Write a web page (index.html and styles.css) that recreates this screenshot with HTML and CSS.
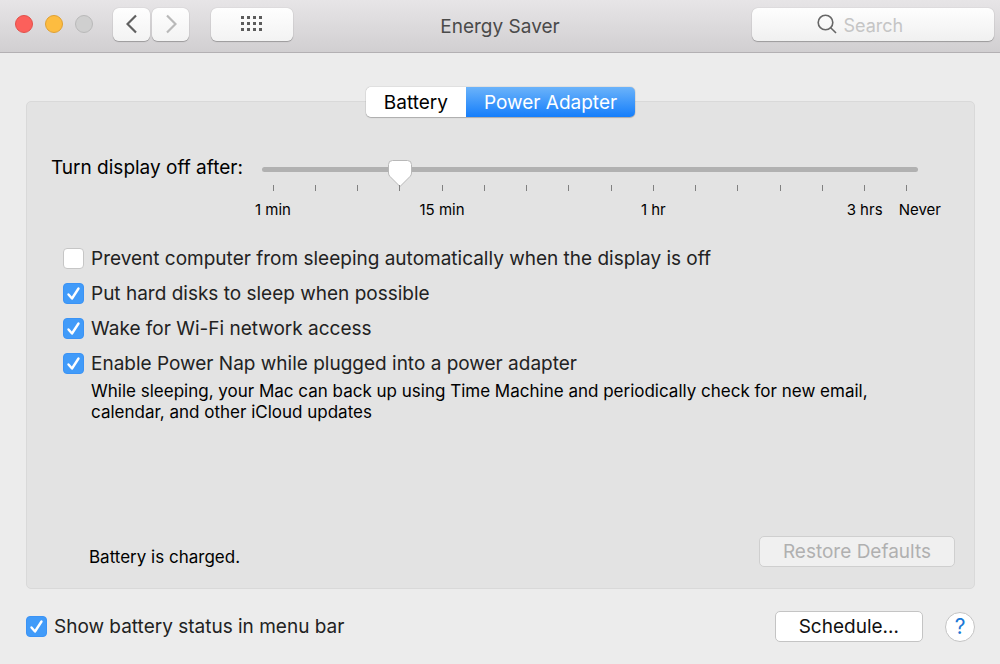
FILE: index.html
```
<!DOCTYPE html>
<html lang="en">
<head>
    <meta charset="UTF-8">
    <meta name="viewport" content="width=device-width, initial-scale=1.0">
    <title>Energy Saver</title>
    <link rel="stylesheet" href="styles.css">
</head>
<body>
    <header class="toolbar">
        <div class="toolbar-left">
            <div class="lights">
                <button type="button" class="light light-close" aria-label="Close"></button>
                <button type="button" class="light light-minimize" aria-label="Minimize"></button>
                <button type="button" class="light light-zoom" aria-label="Zoom" disabled></button>
            </div>
            <div class="nav">
                <button type="button" class="tool" aria-label="Back">
                    <svg width="12" height="20" viewBox="0 0 12 20"><path d="M10 1.500 1.500 10l8.500 8.500" fill="none" stroke="#606060" stroke-width="2.200"/></svg>
                </button>
                <button type="button" class="tool" aria-label="Forward" disabled>
                    <svg width="12" height="20" viewBox="0 0 12 20"><path d="M2 1.500 10.500 10 2 18.500" fill="none" stroke="#b9b9b9" stroke-width="2.200"/></svg>
                </button>
            </div>
            <button type="button" class="tool tool-grid" aria-label="Show All">
                <svg width="22" height="16" viewBox="0 0 22 16" fill="none" stroke="#5c5c5c" stroke-width="3">
                    <path d="M0 1.500h22M0 7.500h22M0 13.500h22" stroke-dasharray="3 3"/>
                </svg>
            </button>
        </div>
        <h1>Energy Saver</h1>
        <label class="search">
            <svg width="20" height="20" viewBox="0 0 20 20" fill="none" stroke="#666" stroke-width="1.600">
                <circle cx="8.500" cy="8.500" r="7.300"/>
                <path d="M13.700 13.700 19 19"/>
            </svg>
            <input type="search" placeholder="Search" aria-label="Search">
        </label>
    </header>

    <main>
        <div class="tabs" role="tablist">
            <button type="button" class="tab" role="tab" aria-selected="false">Battery</button>
            <button type="button" class="tab active" role="tab" aria-selected="true">Power Adapter</button>
        </div>

        <section class="panel">
            <div class="slider-row">
                <label for="displayOff">Turn display off after:</label>
                <div class="slider">
                    <input type="range" id="displayOff" min="0" max="15" value="3">
                    <div class="scale">
                        <span>1 min</span>
                        <span></span>
                        <span></span>
                        <span></span>
                        <span>15 min</span>
                        <span></span>
                        <span></span>
                        <span></span>
                        <span></span>
                        <span>1 hr</span>
                        <span></span>
                        <span></span>
                        <span></span>
                        <span></span>
                        <span>3 hrs</span>
                        <span class="last"><b>Never</b></span>
                    </div>
                </div>
            </div>

            <div class="options">
                <label class="check"><input type="checkbox"> Prevent computer from sleeping automatically when the display is off</label>
                <label class="check"><input type="checkbox" checked> Put hard disks to sleep when possible</label>
                <label class="check"><input type="checkbox" checked> Wake for Wi-Fi network access</label>
                <label class="check"><input type="checkbox" checked aria-describedby="napNote"> Enable Power Nap while plugged into a power adapter</label>
                <p id="napNote">While sleeping, your Mac can back up using Time Machine and periodically check for new email, calendar, and other iCloud updates</p>
            </div>

            <div class="panel-footer">
                <p>Battery is charged.</p>
                <button type="button" class="btn" disabled>Restore Defaults</button>
            </div>
        </section>

        <footer>
            <label class="check"><input type="checkbox" checked> Show battery status in menu bar</label>
            <button type="button" class="btn">Schedule…</button>
            <button type="button" class="help" aria-label="Help">?</button>
        </footer>
    </main>
</body>
</html>
```
FILE: styles.css
```
* {
    box-sizing: border-box;
}

body {
    font-family: Inter, 'Liberation Sans', sans-serif;
    font-size: 19px;
    color: #222;
    background-color: #ececec;
    display: flex;
    flex-direction: column;
    min-height: 100vh;
    margin: 0;
}

button,
input {
    font: inherit;
    margin: 0;
}

p {
    margin: 0;
}

/* Toolbar */
.toolbar {
    display: grid;
    grid-template-columns: 1fr auto 1fr;
    align-items: center;
    height: 53px;
    padding-bottom: 4px;
    background: linear-gradient(#e7e5e7, #d1cfd1);
    border-bottom: 1px solid #b3b0b3;
}

.toolbar-left {
    display: flex;
    align-items: center;
    padding-left: 15px;
}

.lights {
    display: flex;
    gap: 12px;
    margin-right: 20px;
}

.light {
    width: 18px;
    height: 18px;
    padding: 0;
    border: 1px solid #e2504a;
    border-radius: 50%;
    background-color: #fc605b;
}

.light-minimize {
    border-color: #dfa032;
    background-color: #fdbc40;
}

.light-zoom {
    border-color: #b9b9b9;
    background-color: #cfcfcf;
}

.nav {
    display: flex;
    gap: 2px;
    margin-right: 22px;
}

.tool {
    display: flex;
    align-items: center;
    justify-content: center;
    width: 37px;
    height: 33px;
    padding: 0;
    border: none;
    border-radius: 6px;
    background: linear-gradient(#fefefe, #f3f3f3);
    box-shadow: 0 0 1px rgba(0, 0, 0, 0.3), 0 1px 1px rgba(0, 0, 0, 0.25);
}

.tool-grid {
    width: 82px;
}

h1 {
    margin: 0;
    padding-top: 4px;
    font-size: 19px;
    font-weight: 400;
    color: #4a4a4a;
}

.search {
    display: flex;
    align-items: center;
    justify-content: center;
    justify-self: end;
    gap: 7px;
    width: 242px;
    height: 33px;
    margin-right: 6px;
    border-radius: 6px;
    background: linear-gradient(#fefefe, #f0f0f0);
    box-shadow: 0 0 1px rgba(0, 0, 0, 0.3), 0 1px 1px rgba(0, 0, 0, 0.25);
}

.search input {
    width: 86px;
    padding: 2px 0 0;
    border: none;
    outline: none;
    background: none;
    font-size: 18px;
}

.search input::placeholder {
    color: #c5c5c5;
}

/* Content */
main {
    flex: 1;
    display: flex;
    flex-direction: column;
    padding: 34px 25px 20px 26px;
}

.tabs {
    display: flex;
    align-self: center;
    z-index: 1;
    margin-bottom: -16px;
    border-radius: 5px;
    box-shadow: 0 0 1px rgba(0, 0, 0, 0.5), 0 1px 1px rgba(0, 0, 0, 0.2);
}

.tab {
    height: 30px;
    padding: 0 18px;
    border: none;
    border-radius: 5px 0 0 5px;
    background-color: #fff;
    color: #000;
}

.tab.active {
    border-radius: 0 5px 5px 0;
    background: linear-gradient(#6bb3fa, #157efb);
    color: #fff;
}

.panel {
    flex: 1;
    display: flex;
    flex-direction: column;
    padding: 56px 19px 21px 24px;
    border: 1px solid #d9d9d9;
    border-radius: 5px;
    background-color: #e3e3e3;
}

.slider-row {
    display: flex;
    gap: 19px;
    padding-right: 37px;
    line-height: 20px;
    color: #000;
}

.slider {
    flex: 1;
    padding-top: 2px;
}

.slider input {
    -webkit-appearance: none;
    appearance: none;
    display: block;
    width: 100%;
    height: 19px;
    background: none;
}

.slider input::-webkit-slider-runnable-track {
    height: 5px;
    border-radius: 3px;
    background-color: #b1b1b1;
}

.slider input::-webkit-slider-thumb {
    -webkit-appearance: none;
    width: 24px;
    height: 27px;
    margin-top: -7px;
    background: url("data:image/svg+xml,%3Csvg xmlns='http://www.w3.org/2000/svg' width='24' height='27'%3E%3Cpath d='M4.500.5h15q4 0 4 4V13q0 2-1.500 3.500L12 26.500 2 16.500Q.5 15 .5 13V4.500q0-4 4-4z' fill='%23fff' stroke='%23b8b8b8'/%3E%3C/svg%3E") no-repeat;
}

/* One column per tick, so every label is centred under its tick */
.scale {
    display: grid;
    grid-template-columns: repeat(16, minmax(0, 1fr));
    margin: 6px -10px 0;
    font-size: 15px;
}

.scale span {
    display: flex;
    flex-direction: column;
    align-items: center;
    gap: 9px;
    white-space: nowrap;
}

.scale span::before {
    content: "";
    width: 1px;
    height: 6px;
    background-color: #808080;
}

.scale .last b {
    padding-left: 26px;
    font-weight: 400;
}

.options {
    margin-top: 21px;
    padding-left: 12px;
}

.check {
    display: flex;
    align-items: center;
    gap: 7px;
    line-height: 35px;
}

.check input {
    -webkit-appearance: none;
    appearance: none;
    flex: none;
    width: 21px;
    height: 21px;
    border: 1px solid #c6c6c6;
    border-radius: 4px;
    background-color: #fff;
}

.check input:checked {
    border-color: #3b93f5;
    background: #419bf9 url("data:image/svg+xml,%3Csvg xmlns='http://www.w3.org/2000/svg' width='19' height='19'%3E%3Cpath d='M4.500 10.500 8 14.500 14.500 4.500' fill='none' stroke='%23fff' stroke-width='2.400' stroke-linecap='round' stroke-linejoin='round'/%3E%3C/svg%3E") no-repeat;
}

.options p {
    max-width: 820px;
    padding-left: 28px;
    font-size: 17px;
    line-height: 21px;
    color: #000;
}

.panel-footer {
    display: flex;
    align-items: flex-end;
    justify-content: space-between;
    margin-top: auto;
    padding-left: 38px;
    font-size: 17px;
    line-height: 20px;
    color: #000;
}

.btn {
    height: 31px;
    padding: 0 23px;
    border: 1px solid #c4c4c4;
    border-radius: 5px;
    background-color: #fff;
    font-size: 19px;
    color: #111;
}

.btn:disabled {
    border-color: #cfcfcf;
    background-color: #f0f0f0;
    color: #b0b0b0;
}

footer {
    display: flex;
    align-items: center;
    margin-top: 20px;
}

footer .check {
    margin-right: auto;
}

.help {
    width: 30px;
    height: 30px;
    margin-left: 22px;
    padding: 0;
    border: 1px solid #c4c4c4;
    border-radius: 50%;
    background-color: #fff;
    font-size: 21px;
    color: #1a78d6;
}
```
